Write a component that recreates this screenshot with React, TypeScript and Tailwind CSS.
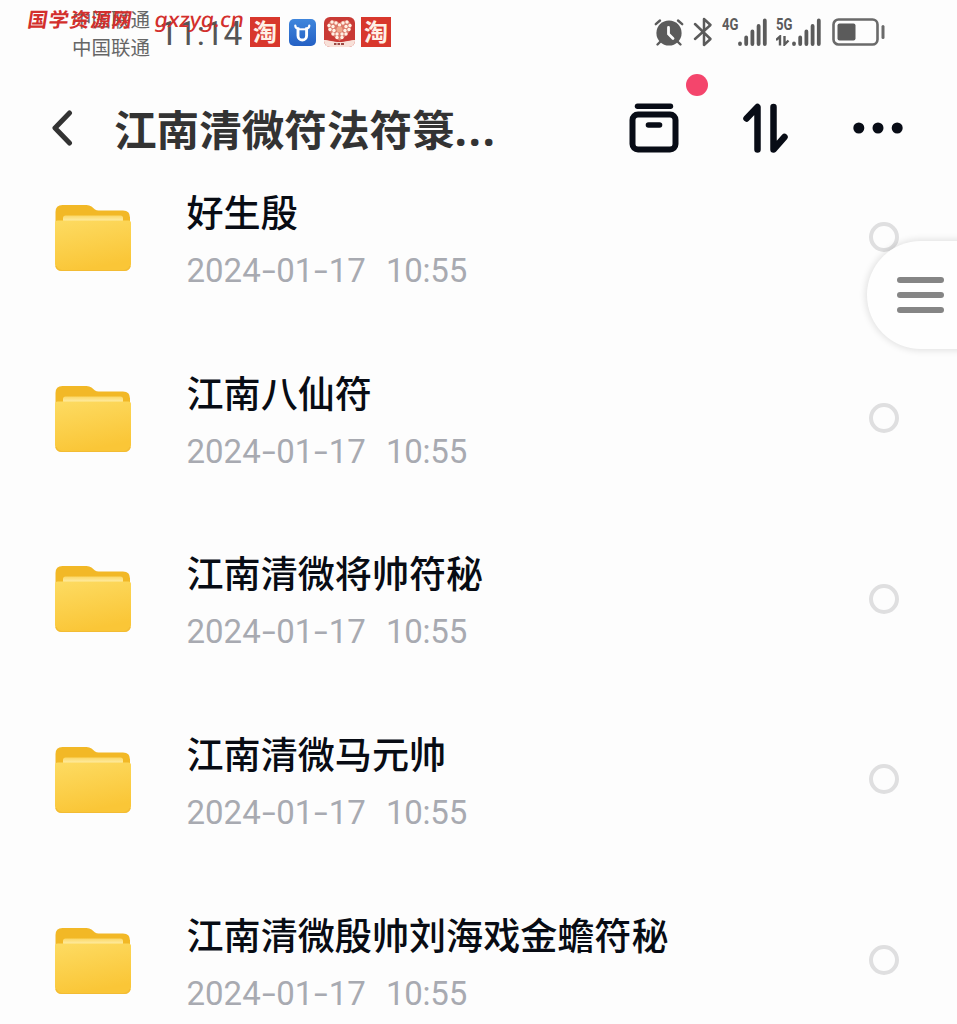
import React from "react"

interface Folder {
  name: string;
  date: string;
  time: string;
}

const folders: Folder[] = [
  { name: "好生殷", date: "2024-01-17", time: "10:55" },
  { name: "江南八仙符", date: "2024-01-17", time: "10:55" },
  { name: "江南清微将帅符秘", date: "2024-01-17", time: "10:55" },
  { name: "江南清微马元帅", date: "2024-01-17", time: "10:55" },
  { name: "江南清微殷帅刘海戏金蟾符秘", date: "2024-01-17", time: "10:55" },
]

function TaoIcon() {
  return (
    <div className="flex h-[30px] w-[30px] items-center justify-center bg-[#d8372c] pb-[2px] text-[24px] leading-none font-bold text-[#fff0e6]">
      淘
    </div>
  )
}

function BullIcon() {
  return (
    <svg width="27" height="27" viewBox="0 0 27 27">
      <defs>
        <linearGradient id="bull" x1="0" y1="0" x2="0" y2="1">
          <stop offset="0" stopColor="#3f86dc" />
          <stop offset="1" stopColor="#2460c4" />
        </linearGradient>
      </defs>
      <rect width="27" height="27" rx="5" fill="url(#bull)" />
      <path d="M6.300 6.500c0 2 1 3 3 3M20.300 6.500c0 2-1 3-3 3" fill="none" stroke="#fff" strokeWidth="2.200" strokeLinecap="round" />
      <path d="M9 8.500v8.200a4.300 4.300 0 0 0 8.600 0V8.500" fill="none" stroke="#fff" strokeWidth="2.900" />
      <path d="M9 10.300h8.600" fill="none" stroke="#fff" strokeWidth="2" />
    </svg>
  )
}

function HeartIcon() {
  const dots = [
    [8, 5], [12, 6], [19, 6], [23, 5], [5, 8.5], [9, 9.500], [22, 9.500], [26, 8.500], [6, 12.500], [10, 13.500],
    [21, 13.500], [25, 12.500], [9, 17], [13, 17], [18, 17], [22, 17], [13, 20.500], [18, 20.500], [15.500, 8],
  ]
  return (
    <svg width="31" height="30" viewBox="0 0 31 30">
      <defs>
        <clipPath id="app"><rect width="31" height="30" rx="6" /></clipPath>
      </defs>
      <g clipPath="url(#app)">
        <rect width="31" height="30" fill="#c93a35" />
        <path d="M15.500 24C7 18 2.500 12 4 7.500 5 3 12 2 15.500 6 19 2 26 3 27 7.500 28.500 12 24 18 15.500 24z" fill="#dc7a6a" />
        {dots.map(([x, y]) => (
          <circle key={`${x}-${y}`} cx={x} cy={y} r="1.700" fill="#fff0e4" />
        ))}
        <circle cx="15.500" cy="12.500" r="3" fill="#f0a88c" />
        <path d="M0 23c5 0 9 2 15.500 2S26 23 31 23v7H0z" fill="#f8e0d8" />
        <path d="M10 27h2.500m1 0h2.500m1 0h3" stroke="#9b4a45" strokeWidth="2" />
      </g>
    </svg>
  )
}

function AlarmIcon() {
  return (
    <svg width="30" height="29" viewBox="0 0 30 29" fill="none" strokeLinecap="round">
      <circle cx="15" cy="15" r="12.600" fill="#5b5b5b" />
      <path d="M1.800 6.200L6 2.500M28.200 6.200L24 2.500" stroke="#5b5b5b" strokeWidth="2.400" />
      <path d="M6.500 23.500l-3 3M23.500 23.500l3 3" stroke="#5b5b5b" strokeWidth="2.400" />
      <path d="M14.500 9.500V16l4.500 4.500" stroke="#fdfdfd" strokeWidth="2.800" />
    </svg>
  )
}

function BluetoothIcon() {
  return (
    <svg width="20" height="30" viewBox="0 0 20 30" fill="none" stroke="#5b5b5b" strokeWidth="2.500" strokeLinejoin="round" strokeLinecap="round">
      <path d="M2 7l15.500 15-6.500 6V2l6.500 6L2 22" />
    </svg>
  )
}

function Bars() {
  return (
    <svg className="absolute right-0 bottom-0" width="30" height="28" viewBox="0 0 30 28" stroke="#5b5b5b" strokeWidth="3.800" strokeLinecap="round">
      <path d="M3 25.500v.500M9.200 19.500v6.500M15.400 13.500v12.500M21.600 8v18M27.800 2.500v23.500" />
    </svg>
  )
}

function Signal({ label, data }: { label: string; data?: boolean }) {
  return (
    <div className="relative h-[28px] w-[45px]">
      <span className="absolute top-0 left-0 origin-left scale-x-[0.82] font-[Roboto] text-[16px] leading-[13px] font-bold text-[#5b5b5b]">{label}</span>
      {data && (
        <svg className="absolute bottom-0 left-0" width="14" height="11" viewBox="0 0 14 11" fill="none" stroke="#5b5b5b" strokeWidth="2.400">
          <path d="M0 5l4-3.500V10.500M8.500 1v8.500l4-4" />
        </svg>
      )}
      <Bars />
    </div>
  )
}

function BatteryIcon() {
  return (
    <svg width="54" height="28" viewBox="0 0 54 28">
      <rect x="1.500" y="1.500" width="44" height="25" rx="5" fill="none" stroke="#6a6a6a" strokeWidth="2.600" />
      <rect x="5.500" y="5.500" width="18" height="17" rx="2" fill="#5b5b5b" />
      <path d="M51 8.500v11" stroke="#6a6a6a" strokeWidth="3" strokeLinecap="round" />
    </svg>
  )
}

function StatusBar() {
  return (
    <div className="relative flex h-[66px] items-start">
      <div className="ml-[72px] w-[87px] pt-[5px] text-[19.500px] leading-[28px] whitespace-nowrap text-[#666]">
        <p>中国联通</p>
        <p>中国联通</p>
      </div>
      <div className="mt-[14px] w-[91px] font-[Roboto] text-[33.500px] leading-[40px] whitespace-nowrap text-[#555]">11:14</div>
      <div className="mt-[17px] flex items-center">
        <TaoIcon />
        <div className="ml-[9px]"><BullIcon /></div>
        <div className="ml-[8px]"><HeartIcon /></div>
        <div className="ml-[6px]"><TaoIcon /></div>
      </div>
      <div className="mt-[17px] ml-[263px] flex items-center">
        <AlarmIcon />
        <div className="ml-[9px]"><BluetoothIcon /></div>
        <div className="ml-[9px]"><Signal label="4G" /></div>
        <div className="ml-[9px]"><Signal label="5G" data /></div>
        <div className="ml-[11px]"><BatteryIcon /></div>
      </div>
      <div className="absolute top-[6px] left-[28px] flex text-[20px] leading-[26px] font-bold whitespace-nowrap text-[#d32f2c]">
        <span className="w-[127px] -skew-x-[9deg] tracking-[1px]">国学资源网</span>
        <span className="-skew-x-[9deg] font-['Noto_Sans','Noto_Sans_CJK_SC',sans-serif] text-[21px] font-medium tracking-[0.200px]">gxzyg.cn</span>
      </div>
    </div>
  )
}

function Header() {
  return (
    <header className="relative flex h-[126px] items-center">
      <svg className="mb-[2px] ml-[51px]" width="22" height="36" viewBox="0 0 22 36" fill="none" stroke="#333" strokeWidth="5" strokeLinecap="round" strokeLinejoin="round">
        <path d="M18.500 3L4 18l14.500 15" />
      </svg>
      <h1 className="ml-[41px] w-[515px] pb-[2px] text-[42.600px] leading-[50px] font-bold whitespace-nowrap text-[#333]">
        江南清微符法符箓
        <span className="font-['Noto_Sans'] tracking-[2px]">...</span>
      </h1>
      <svg className="mb-[3px]" width="50" height="50" viewBox="0 0 50 50" fill="none" stroke="#080c16" strokeLinecap="round">
        <path d="M8.500 3.300h33" strokeWidth="5.400" />
        <rect x="3.500" y="11.500" width="43" height="35" rx="5.500" strokeWidth="6" />
        <path d="M19.500 22h11" strokeWidth="5.600" />
      </svg>
      <svg className="mb-[3px] ml-[64px]" width="46" height="50" viewBox="0 0 46 50" fill="none" stroke="#080c16" strokeWidth="6.500" strokeLinecap="round" strokeLinejoin="round">
        <path d="M3.500 15.500L14.500 4v42.500M30.500 4v42.500l11-12.500" />
      </svg>
      <svg className="mb-[2px] ml-[64px]" width="50" height="12" viewBox="0 0 50 12" fill="#080c16">
        <circle cx="5.800" cy="6" r="5.500" />
        <circle cx="25" cy="6" r="5.500" />
        <circle cx="44.200" cy="6" r="5.500" />
      </svg>
      <span className="absolute top-[8px] left-[685.500px] h-[22px] w-[22px] rounded-full bg-[#f4456c]" />
    </header>
  )
}

function FolderIcon() {
  return (
    <svg width="76" height="67" viewBox="0 0 76 67">
      <defs>
        <linearGradient id="front" x1="0" y1="0" x2="0.300" y2="1">
          <stop offset="0" stopColor="#fddb62" />
          <stop offset="1" stopColor="#fac637" />
        </linearGradient>
        <linearGradient id="paper" x1="0" y1="0" x2="0" y2="1">
          <stop offset="0" stopColor="#fbd765" />
          <stop offset="1" stopColor="#fff3b8" />
        </linearGradient>
      </defs>
      <path d="M.500 24V7q0-7 7-7h24q3 0 5 1.500l3.500 3q1.500 1 3.500 1H68q7 0 7 7V24z" fill="#f2b826" />
      <rect x="8" y="10.500" width="60" height="7" rx="2.500" fill="url(#paper)" />
      <path d="M0 18q0-2.500 2.500-2.500h71Q76 15.500 76 18v41q0 7-7 7H7q-7 0-7-7z" fill="url(#front)" />
      <path d="M1 61q1.500 4.500 6 4.500h62q4.500 0 6-4.500" fill="none" stroke="#f3bc34" strokeWidth="1.200" />
    </svg>
  )
}

function FolderRow({ name, date, time }: Folder) {
  const parts = date.split("-")
  return (
    <li className="flex h-[180.700px] shrink-0 items-start">
      <div className="mt-[12px] ml-[55px]"><FolderIcon /></div>
      <div className="-mt-[3px] ml-[55.500px] w-[682px]">
        <p className="text-[37.100px] leading-[42px] font-medium whitespace-nowrap text-[#080c14]">{name}</p>
        <p className="mt-[18px] flex font-[Roboto] text-[33px] leading-[42px] whitespace-nowrap text-[#a8aab1]">
          {parts.map((part, i) => (
            <span key={i}>
              {i > 0 && <span className="inline-block w-[15.500px] origin-center scale-x-[1.500] text-center">-</span>}
              {part}
            </span>
          ))}
          <span className="ml-[20px] tracking-[-0.200px]">{time}</span>
        </p>
      </div>
      <span className="mt-[29.500px] h-[30px] w-[30px] rounded-full border-4 border-[#dfdfe0]" />
    </li>
  )
}

export default function App() {
  return (
    <div className="relative h-[1024px] w-[957px] overflow-hidden bg-[#fdfdfd] font-['Noto_Sans_CJK_SC',sans-serif]">
      <StatusBar />
      <Header />
      <ul className="mt-[0.900px] flex flex-col">
        {folders.map((folder) => (
          <FolderRow key={folder.name} {...folder} />
        ))}
      </ul>
      {/* floating menu handle */}
      <div className="absolute top-[241px] left-[867px] flex h-[108px] w-[110px] flex-col justify-center gap-[9px] rounded-l-full bg-[#fefefe] pl-[30px] shadow-[0_0_6px_2px_rgba(0,0,0,0.1)]">
        <span className="h-[6px] w-[47px] rounded-full bg-[#858585]" />
        <span className="h-[6px] w-[47px] rounded-full bg-[#858585]" />
        <span className="h-[6px] w-[47px] rounded-full bg-[#858585]" />
      </div>
    </div>
  )
}
